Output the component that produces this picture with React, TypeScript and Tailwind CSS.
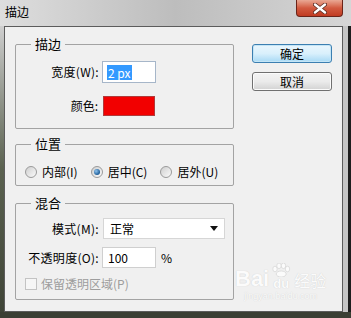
import React from "react";

const Radio = ({ checked, label }: { checked?: boolean; label: string }) => (
  <div className="flex items-center gap-[5px]">
    <div className="w-[12px] h-[12px] rounded-full border border-[#9a9a9a] bg-gradient-to-br from-[#cfcfcf] to-[#fbfbfb] flex items-center justify-center">
      {checked && (
        <div className="w-[6px] h-[6px] rounded-full bg-[radial-gradient(circle_at_35%_35%,#8fc3ee,#1d5d98_70%)]" />
      )}
    </div>
    <span className="leading-[14px]">{label}</span>
  </div>
);

const GroupBox = ({
  title,
  className,
  children,
}: {
  title: string;
  className?: string;
  children: React.ReactNode;
}) => (
  <div className={`relative border border-[#a3a3a3] rounded-[2px] ${className ?? ""}`}>
    <span className="absolute -top-[10px] left-[15px] px-[4px] bg-[#f0f0f0] leading-[18px] text-[13px]">
      {title}
    </span>
    {children}
  </div>
);

export default function App() {
  return (
    <div className="w-[351px] h-[318px] flex flex-col bg-[#3a3d33] text-[12px] text-black font-['Noto_Sans_CJK_SC','Microsoft_YaHei',sans-serif] overflow-hidden">
      {/* title bar */}
      <div className="h-[26px] flex items-start bg-gradient-to-r from-[#dedede] via-[#bdbdbd] to-[#d6d6d6]">
        <span className="pl-[5px] pt-[4px] leading-[16px] text-[12px]">描边</span>
        <div className="ml-auto mr-[8px] w-[47px] h-[17px] rounded-b-[4px] border border-t-0 border-[#6b2419] bg-gradient-to-b from-[#e9a894] via-[#d25a3f] to-[#c03b22] flex items-center justify-center">
          <svg width="14" height="11" viewBox="0 0 14 11">
            <path d="M2 1.5 L12 9.5 M12 1.5 L2 9.5" stroke="#5a2a20" strokeWidth="4" strokeLinecap="round" />
            <path d="M2 1.5 L12 9.5 M12 1.5 L2 9.5" stroke="#ffffff" strokeWidth="2.4" strokeLinecap="round" />
          </svg>
        </div>
      </div>

      <div className="flex h-[286px]">
        {/* left frame */}
        <div className="w-[4px] bg-gradient-to-b from-[#cfcfcf] via-[#5b6250] to-[#3f4437]" />

        {/* dialog body */}
        <div className="relative w-[339px] border border-[#5c5c5c] bg-[#f0f0f0] flex pl-[10px] pt-[17px]">
          <div className="w-[219px] flex flex-col">
            <GroupBox title="描边" className="h-[85px] pt-[16px]">
              <div className="grid grid-cols-[86px_auto] items-center gap-y-[13px]">
                <span className="text-right pr-[3px] tracking-[0.3px]">宽度(W):</span>
                <div className="w-[54px] h-[22px] border border-[#a6b6c9] bg-white flex items-center pl-[4px]">
                  <span className="bg-[#3399ff] text-white leading-[15px] px-[1px]">2 px</span>
                </div>
                <span className="text-right pr-[4px]">颜色:</span>
                <div className="ml-[1px] w-[52px] h-[20px] border border-[#b03a3a] bg-[#f20000]" />
              </div>
            </GroupBox>

            <GroupBox title="位置" className="mt-[15px] h-[42px] pt-[20px] pl-[9px]">
              <div className="flex gap-[13px]">
                <Radio label="内部(I)" />
                <Radio checked label="居中(C)" />
                <Radio label="居外(U)" />
              </div>
            </GroupBox>

            <GroupBox title="混合" className="mt-[17px] h-[97px] pt-[14px]">
              <div className="grid grid-cols-[86px_auto] items-center">
                <span className="text-right pr-[3px] tracking-[0.3px]">模式(M):</span>
                <div className="ml-[1px] w-[122px] h-[21px] border border-[#d6d6d6] bg-white flex items-center pl-[6px] pr-[6px]">
                  <span>正常</span>
                  <svg className="ml-auto" width="8" height="5" viewBox="0 0 8 5">
                    <path d="M0 0 H8 L4 5 Z" fill="#111" />
                  </svg>
                </div>
                <span className="text-right pr-[3px] mt-[8px] tracking-[0.3px]">不透明度(O):</span>
                <div className="flex items-center mt-[8px]">
                  <div className="w-[54px] h-[21px] border border-[#cfcfcf] bg-white flex items-center pl-[5px]">100</div>
                  <span className="ml-[5px]">%</span>
                </div>
              </div>
              <div className="flex items-center pl-[9px] mt-[9px] gap-[4px] text-[#9d9d9d]">
                <div className="w-[12px] h-[12px] border border-[#c3c3c3] bg-[#f6f6f6]" />
                <span className="leading-[14px]">保留透明区域(P)</span>
              </div>
            </GroupBox>
          </div>

          <div className="ml-[18px] w-[80px] flex flex-col gap-[9px]">
            <button className="h-[19px] rounded-[3px] border border-[#3c7fb1] bg-gradient-to-b from-[#eaf6fd] via-[#d9f0fc] to-[#a7d9f5] shadow-[inset_0_0_0_1px_#c4e5f6] leading-[15px]">
              确定
            </button>
            <button className="h-[19px] rounded-[3px] border border-[#707070] bg-gradient-to-b from-[#f3f3f3] via-[#ebebeb] to-[#d2d2d2] shadow-[inset_0_0_0_1px_#fbfbfb] leading-[15px]">
              取消
            </button>
          </div>

          {/* watermark */}
          <div className="absolute left-[230px] top-[236px] flex flex-col items-center text-[#fbfbfb] [text-shadow:0_0_1px_#c6c6c6] pointer-events-none">
            <div className="flex items-end leading-none">
              <span className="text-[22px] font-bold font-['Liberation_Sans',sans-serif]">Bai</span>
              <div className="ml-[2px] flex flex-col items-center">
                <svg width="20" height="14" viewBox="0 0 20 14">
                  <g fill="#fbfbfb" stroke="#cfcfcf" strokeWidth="0.6">
                    <ellipse cx="4" cy="6" rx="2.2" ry="2.8" />
                    <ellipse cx="8" cy="2.8" rx="2.2" ry="2.8" />
                    <ellipse cx="12.5" cy="2.8" rx="2.2" ry="2.8" />
                    <ellipse cx="16.5" cy="6" rx="2.2" ry="2.8" />
                    <ellipse cx="10.2" cy="11" rx="5" ry="3" />
                  </g>
                </svg>
                <span className="text-[13px] font-bold font-['Liberation_Sans',sans-serif] leading-[13px]">du</span>
              </div>
              <span className="ml-[3px] text-[16px] leading-[20px]">经验</span>
            </div>
            <span className="text-[9px] leading-[12px] font-['Liberation_Sans',sans-serif]">jingyan.baidu.com</span>
          </div>
        </div>

        {/* right frame */}
        <div className="w-[5px] bg-[#c5c5c5]" />
        <div className="w-[3px] bg-[#1e1e1e]" />
      </div>

      <div className="flex-1 bg-[#3b3f34]" />
    </div>
  );
}
